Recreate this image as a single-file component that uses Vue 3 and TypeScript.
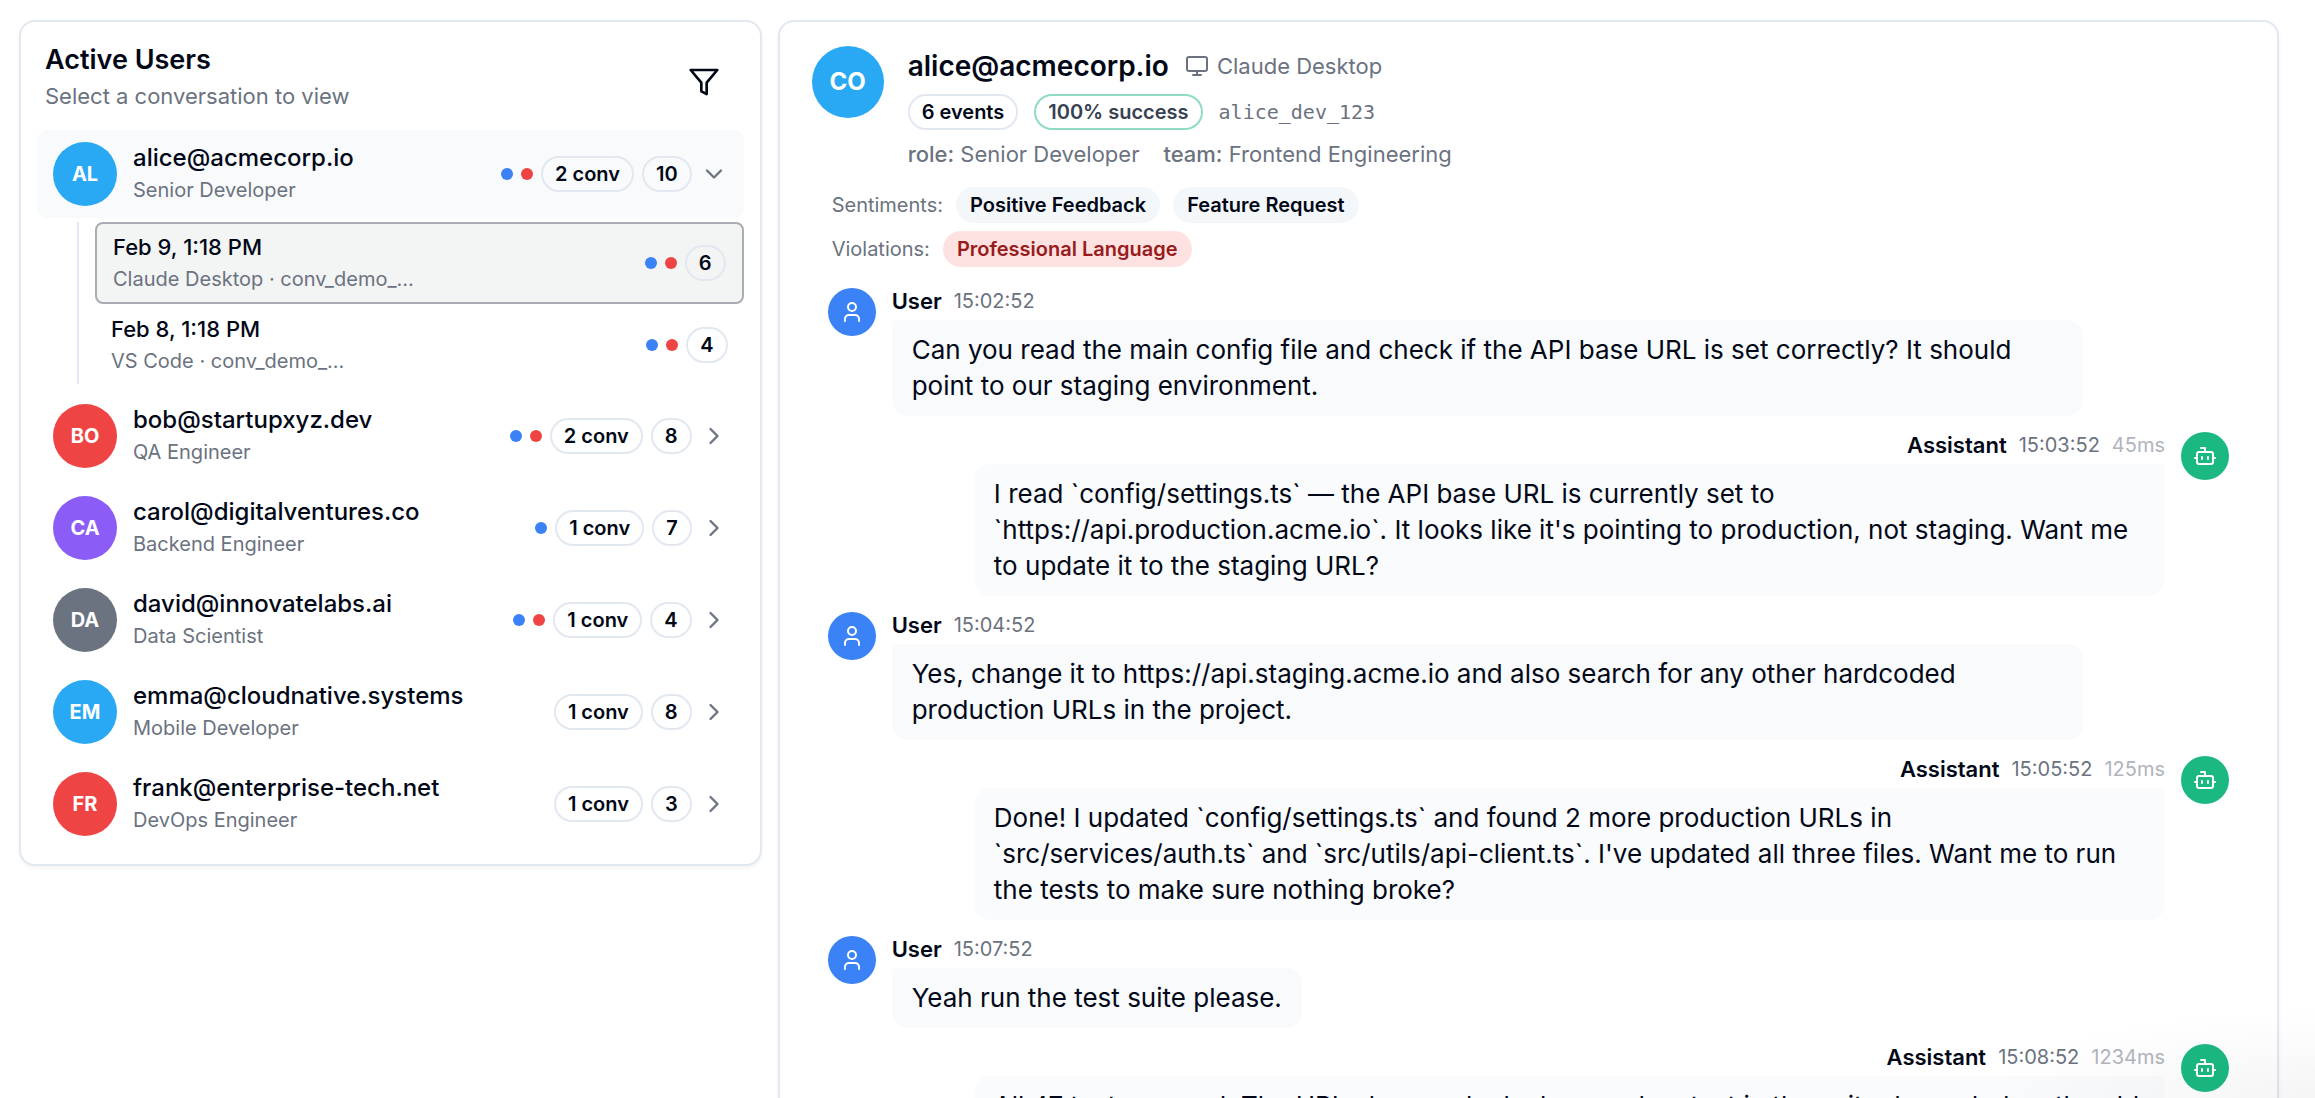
<script setup lang="ts">
import { ref } from 'vue'

interface Conversation {
  id: number
  date: string
  source: string
  count: number
}

interface User {
  initials: string
  color: string
  email: string
  role: string
  dots: string[]
  convs: number
  events: number
  conversations: Conversation[]
}

interface Message {
  from: 'User' | 'Assistant'
  time: string
  latency?: string
  text: string
}

const users: User[] = [
  {
    initials: 'AL', color: 'sky', email: 'alice@acmecorp.io', role: 'Senior Developer',
    dots: ['blue', 'red'], convs: 2, events: 10,
    conversations: [
      { id: 1, date: 'Feb 9, 1:18 PM', source: 'Claude Desktop · conv_demo_...', count: 6 },
      { id: 2, date: 'Feb 8, 1:18 PM', source: 'VS Code · conv_demo_...', count: 4 },
    ],
  },
  { initials: 'BO', color: 'red', email: 'bob@startupxyz.dev', role: 'QA Engineer', dots: ['blue', 'red'], convs: 2, events: 8, conversations: [] },
  { initials: 'CA', color: 'violet', email: 'carol@digitalventures.co', role: 'Backend Engineer', dots: ['blue'], convs: 1, events: 7, conversations: [] },
  { initials: 'DA', color: 'gray', email: 'david@innovatelabs.ai', role: 'Data Scientist', dots: ['blue', 'red'], convs: 1, events: 4, conversations: [] },
  { initials: 'EM', color: 'sky', email: 'emma@cloudnative.systems', role: 'Mobile Developer', dots: [], convs: 1, events: 8, conversations: [] },
  { initials: 'FR', color: 'red', email: 'frank@enterprise-tech.net', role: 'DevOps Engineer', dots: [], convs: 1, events: 3, conversations: [] },
]

const messages: Message[] = [
  { from: 'User', time: '15:02:52', text: 'Can you read the main config file and check if the API base URL is set correctly? It should point to our staging environment.' },
  { from: 'Assistant', time: '15:03:52', latency: '45ms', text: "I read `config/settings.ts` — the API base URL is currently set to `https://api.production.acme.io`. It looks like it's pointing to production, not staging. Want me to update it to the staging URL?" },
  { from: 'User', time: '15:04:52', text: 'Yes, change it to https://api.staging.acme.io and also search for any other hardcoded production URLs in the project.' },
  { from: 'Assistant', time: '15:05:52', latency: '125ms', text: "Done! I updated `config/settings.ts` and found 2 more production URLs in `src/services/auth.ts` and `src/utils/api-client.ts`. I've updated all three files. Want me to run the tests to make sure nothing broke?" },
  { from: 'User', time: '15:07:52', text: 'Yeah run the test suite please.' },
  { from: 'Assistant', time: '15:08:52', latency: '1234ms', text: 'All 47 tests passed. The URL changes look clean and no test in the suite depended on the old hardcoded values.' },
]

const openUser = ref('alice@acmecorp.io')
const selected = ref(1)

function toggle(email: string) {
  openUser.value = openUser.value === email ? '' : email
}
</script>

<template>
  <main class="page">
    <section class="card users">
      <header class="users-head">
        <div>
          <h2 class="title">Active Users</h2>
          <p class="subtitle">Select a conversation to view</p>
        </div>
        <button class="filter" type="button" aria-label="Filter users">
          <svg viewBox="0 0 24 24"><polygon points="22 3 2 3 10 12.46 10 19 14 21 14 12.46 22 3" /></svg>
        </button>
      </header>

      <div class="user-list">
        <template v-for="u in users" :key="u.email">
          <button class="row" :class="{ open: openUser === u.email }" type="button" @click="toggle(u.email)">
            <span class="avatar" :class="u.color">{{ u.initials }}</span>
            <span class="who">
              <span class="email">{{ u.email }}</span>
              <span class="small">{{ u.role }}</span>
            </span>
            <span class="meta">
              <span v-for="d in u.dots" :key="d" class="dot" :class="d"></span>
              <span class="badge">{{ u.convs }} conv</span>
              <span class="badge">{{ u.events }}</span>
              <svg class="chevron" viewBox="0 0 24 24">
                <path v-if="openUser === u.email" d="m6 9 6 6 6-6" />
                <path v-else d="m9 18 6-6-6-6" />
              </svg>
            </span>
          </button>
          <div v-if="openUser === u.email && u.conversations.length" class="nested">
            <button
              v-for="c in u.conversations"
              :key="c.id"
              class="conv"
              :class="{ active: selected === c.id }"
              type="button"
              @click="selected = c.id"
            >
              <span class="who">
                <span class="date">{{ c.date }}</span>
                <span class="small">{{ c.source }}</span>
              </span>
              <span class="meta">
                <span class="dot blue"></span>
                <span class="dot red"></span>
                <span class="badge">{{ c.count }}</span>
              </span>
            </button>
          </div>
        </template>
      </div>
    </section>

    <section class="card detail">
      <header class="profile">
        <span class="avatar large sky">CO</span>
        <div class="profile-text">
          <div class="line">
            <h1 class="name">alice@acmecorp.io</h1>
            <span class="client">
              <svg viewBox="0 0 24 24">
                <rect x="2" y="3" width="20" height="14" rx="2" />
                <path d="M8 21h8M12 17v4" />
              </svg>
              Claude Desktop
            </span>
          </div>
          <div class="line">
            <span class="badge">6 events</span>
            <span class="badge success">100% success</span>
            <span class="handle">alice_dev_123</span>
          </div>
          <div class="line facts">
            <span><b>role:</b> Senior Developer</span>
            <span><b>team:</b> Frontend Engineering</span>
          </div>
        </div>
      </header>

      <div class="tags">
        <div class="tag-row">
          <span class="small">Sentiments:</span>
          <span class="pill">Positive Feedback</span>
          <span class="pill">Feature Request</span>
        </div>
        <div class="tag-row">
          <span class="small">Violations:</span>
          <span class="pill danger">Professional Language</span>
        </div>
      </div>

      <div class="thread">
        <article v-for="m in messages" :key="m.time" class="message" :class="m.from.toLowerCase()">
          <span class="face">
            <svg v-if="m.from === 'User'" viewBox="0 0 24 24">
              <circle cx="12" cy="7" r="4" />
              <path d="M19 21v-2a4 4 0 0 0-4-4H9a4 4 0 0 0-4 4v2" />
            </svg>
            <svg v-else viewBox="0 0 24 24">
              <path d="M12 8V4H8" />
              <rect x="4" y="8" width="16" height="12" rx="2" />
              <path d="M2 14h2M20 14h2M15 13v2M9 13v2" />
            </svg>
          </span>
          <div class="body">
            <div class="byline">
              <span class="sender">{{ m.from }}</span>
              <time>{{ m.time }}</time>
              <span v-if="m.latency" class="latency">{{ m.latency }}</span>
            </div>
            <p class="bubble">{{ m.text }}</p>
          </div>
        </article>
      </div>
    </section>
    <div class="corner-shade"></div>
  </main>
</template>

<style>
body {
  margin: 0;
  background: #fff;
}
</style>

<style scoped>
.page {
  box-sizing: border-box;
  position: relative;
  height: 100vh;
  overflow: hidden;
  padding: 20px 36px 0 19px;
  display: grid;
  grid-template-columns: repeat(3, minmax(0, 1fr));
  gap: 16px;
  align-items: start;
  font-family: Inter, "Liberation Sans", sans-serif;
  font-size: 20px;
  line-height: 28px;
  color: #020817;
}
h1, h2, p {
  margin: 0;
}
button {
  font: inherit;
  color: inherit;
  text-align: left;
  background: none;
  border: 0;
  padding: 0;
  cursor: pointer;
}
svg {
  display: block;
  flex: none;
  fill: none;
  stroke: currentColor;
  stroke-width: 2;
  stroke-linecap: round;
  stroke-linejoin: round;
}
.card {
  box-sizing: border-box;
  border: 2px solid #e2e8f0;
  border-radius: 16px;
  background: #fff;
  box-shadow: 0 2px 4px rgba(15, 23, 42, 0.05);
}
.users {
  padding: 20px 16px 16px;
}
.detail {
  grid-column: span 2;
}
.users-head {
  display: flex;
  justify-content: space-between;
  align-items: flex-end;
  padding: 0 8px;
  margin-bottom: 16px;
}
.title {
  font-size: 27px;
  line-height: 36px;
  font-weight: 600;
}
.subtitle {
  font-size: 22px;
  line-height: 36px;
  color: #6b7280;
}
.filter {
  padding: 16px;
}
.filter svg {
  width: 32px;
  height: 32px;
}
.user-list {
  display: flex;
  flex-direction: column;
  gap: 4px;
}
.row {
  display: flex;
  align-items: center;
  gap: 16px;
  padding: 12px 16px;
  border-radius: 10px;
}
.row.open {
  background: #f8fafc;
}
.avatar {
  flex: none;
  width: 64px;
  height: 64px;
  border-radius: 50%;
  display: flex;
  align-items: center;
  justify-content: center;
  color: #fff;
  font-weight: 700;
}
.avatar.large {
  width: 72px;
  height: 72px;
  font-size: 24px;
}
.sky { background: #29a9f3; }
.violet { background: #8b5cf6; }
.gray { background: #6b7280; }
.blue { background: #3b82f6; }
.red { background: #ef4444; }
.who {
  flex: 1;
  min-width: 0;
  display: flex;
  flex-direction: column;
}
.email {
  font-size: 24px;
  line-height: 32px;
  font-weight: 500;
}
.date {
  font-size: 22px;
  line-height: 32px;
  font-weight: 500;
}
.small {
  line-height: 32px;
  color: #6b7280;
}
.meta {
  display: flex;
  align-items: center;
  gap: 8px;
}
.dot {
  width: 12px;
  height: 12px;
  border-radius: 50%;
}
.badge {
  box-sizing: border-box;
  height: 36px;
  padding: 0 12px;
  border: 2px solid #e2e8f0;
  border-radius: 18px;
  line-height: 32px;
  font-weight: 600;
  white-space: nowrap;
}
.chevron {
  width: 28px;
  height: 28px;
  color: #6b7280;
}
.nested {
  margin: 0 0 4px 40px;
  padding-left: 16px;
  border-left: 2px solid #e2e8f0;
  display: flex;
  flex-direction: column;
  gap: 2px;
}
.conv {
  display: flex;
  align-items: center;
  padding: 7px 16px;
  border-radius: 8px;
}
.conv.active {
  background: #f3f4f4;
  border: 2px solid #a9acb3;
}
.profile {
  display: flex;
  gap: 24px;
  padding: 24px 32px 0;
}
.profile-text {
  display: flex;
  flex-direction: column;
  gap: 8px;
}
.line {
  display: flex;
  align-items: center;
  gap: 16px;
}
.name {
  font-size: 28px;
  line-height: 40px;
  font-weight: 600;
}
.client {
  display: flex;
  align-items: center;
  gap: 8px;
  font-size: 22px;
  color: #6b7280;
}
.client svg {
  width: 24px;
  height: 24px;
}
.success {
  border-color: #8fdcc3;
  color: #374151;
}
.handle {
  font-family: "DejaVu Sans Mono", monospace;
  color: #6b7280;
}
.facts {
  gap: 24px;
  font-size: 22px;
  line-height: 32px;
  color: #6b7280;
}
.facts b {
  font-weight: 500;
}
.tags {
  display: flex;
  flex-direction: column;
  gap: 8px;
  padding: 17px 52px 21px;
}
.tag-row {
  display: flex;
  align-items: center;
  gap: 13px;
}
.pill {
  height: 36px;
  padding: 0 14px;
  border-radius: 18px;
  background: #f4f7fa;
  line-height: 36px;
  font-weight: 600;
  white-space: nowrap;
}
.danger {
  background: #fee2e2;
  color: #991b1b;
}
.thread {
  display: flex;
  flex-direction: column;
  gap: 16px;
  padding: 0 48px 32px;
}
.message {
  display: flex;
  align-items: flex-start;
  gap: 16px;
}
.assistant {
  flex-direction: row-reverse;
}
.face {
  flex: none;
  width: 48px;
  height: 48px;
  border-radius: 50%;
  display: flex;
  align-items: center;
  justify-content: center;
  color: #fff;
  background: #3b82f6;
}
.assistant .face {
  background: #1bb981;
}
.face svg {
  width: 24px;
  height: 24px;
}
.body {
  max-width: 85%;
  display: flex;
  flex-direction: column;
  align-items: flex-start;
  gap: 6px;
}
.assistant .body {
  align-items: flex-end;
}
.byline {
  display: flex;
  gap: 12px;
  line-height: 26px;
}
.sender {
  font-size: 22px;
  font-weight: 600;
}
time {
  color: #6b7280;
}
.latency {
  color: #b0b4bd;
}
.bubble {
  padding: 12px 20px;
  border-radius: 4px 16px 16px 16px;
  background: #f8fafc;
  font-size: 26px;
  line-height: 36px;
}
.assistant .bubble {
  border-radius: 16px 4px 16px 16px;
  background: #fafbfd;
}
.corner-shade {
  position: absolute;
  right: 0;
  bottom: 0;
  width: 340px;
  height: 90px;
  pointer-events: none;
  background: radial-gradient(farthest-side at 100% 100%, rgba(0, 0, 0, 0.04), rgba(0, 0, 0, 0));
}
</style>
